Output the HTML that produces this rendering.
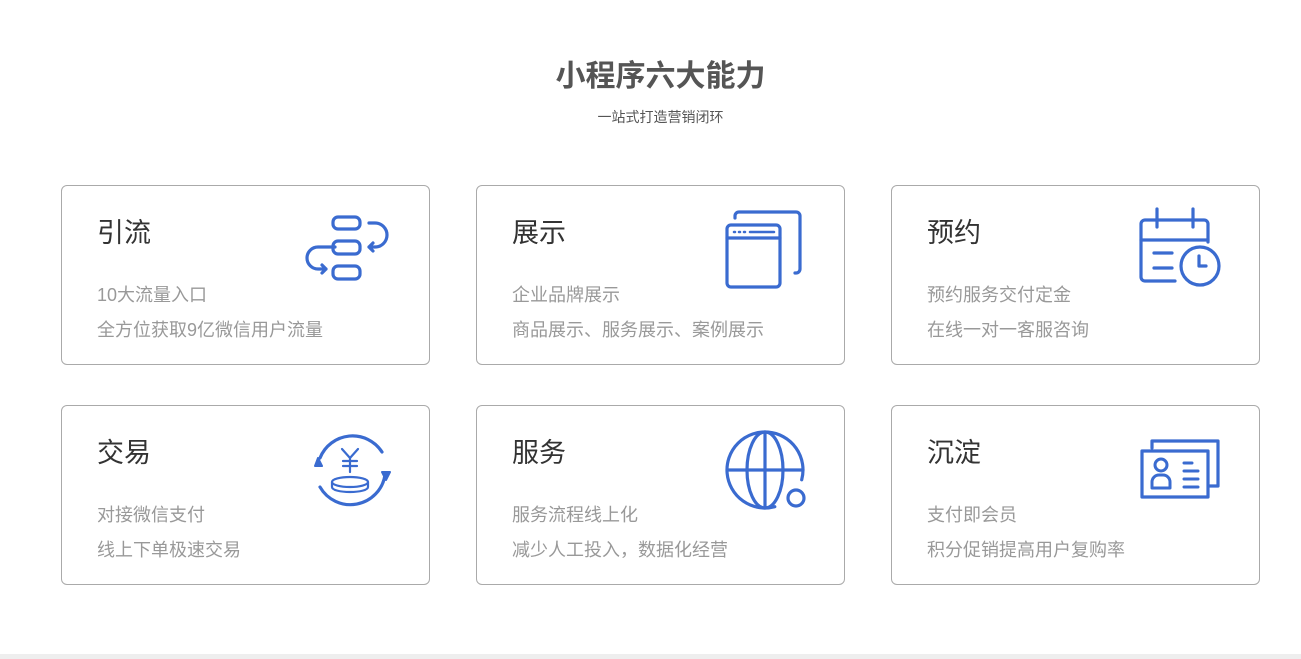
<!DOCTYPE html><html><head><meta charset="utf-8"><style>
body{margin:0;width:1301px;height:659px;background:#fff;position:relative;overflow:hidden;font-family:"Liberation Sans","Noto Sans CJK SC",sans-serif}
.h{position:absolute;top:59px;left:10px;width:1301px;text-align:center;font-size:30px;font-weight:bold;color:#555;line-height:36px}
.s{position:absolute;top:108px;left:10px;width:1301px;text-align:center;font-size:14px;color:#555;line-height:18px}
.c{position:absolute;width:369px;height:180px;border:1px solid #aaa;border-radius:6px;box-sizing:border-box}
.t{position:absolute;left:35px;top:30px;font-size:27px;color:#333;line-height:34px}
.p{position:absolute;left:35px;font-size:18px;color:#999;line-height:22px}
.bar{position:absolute;left:0;top:654px;width:1301px;height:5px;background:#eee}
svg{position:absolute;left:0;top:0}
</style></head><body>
<div class="h">小程序六大能力</div><div class="s">一站式打造营销闭环</div>
<div class="c" style="left:61px;top:185px"><div class="t">引流</div><div class="p" style="top:98px">10大流量入口</div><div class="p" style="top:133px">全方位获取9亿微信用户流量</div></div>
<div class="c" style="left:476px;top:185px"><div class="t">展示</div><div class="p" style="top:98px">企业品牌展示</div><div class="p" style="top:133px">商品展示、服务展示、案例展示</div></div>
<div class="c" style="left:891px;top:185px"><div class="t">预约</div><div class="p" style="top:98px">预约服务交付定金</div><div class="p" style="top:133px">在线一对一客服咨询</div></div>
<div class="c" style="left:61px;top:405px"><div class="t">交易</div><div class="p" style="top:98px">对接微信支付</div><div class="p" style="top:133px">线上下单极速交易</div></div>
<div class="c" style="left:476px;top:405px"><div class="t">服务</div><div class="p" style="top:98px">服务流程线上化</div><div class="p" style="top:133px">减少人工投入，数据化经营</div></div>
<div class="c" style="left:891px;top:405px"><div class="t">沉淀</div><div class="p" style="top:98px">支付即会员</div><div class="p" style="top:133px">积分促销提高用户复购率</div></div>
<div class="bar"></div>
<svg width="1301" height="659" fill="none" stroke="#3a6bd0" stroke-width="3.2" stroke-linecap="round" stroke-linejoin="round">
<rect x="333" y="217" width="27" height="12" rx="5"/><rect x="333" y="241" width="27" height="13" rx="5"/><rect x="333" y="266" width="27" height="13" rx="5"/>
<path d="M369 223h6a10 10 0 0 1 0 24h-6M373 243l-4 4 4 4"/>
<path d="M335 247h-17a11 11 0 0 0 0 22h8M322 265l4 4-4 4"/>
<path d="M735 218v-2a4 4 0 0 1 4-4h57a4 4 0 0 1 4 4v53a4 4 0 0 1-4 4h-1"/>
<rect x="727" y="225" width="53" height="62" rx="4"/><path d="M727 238h53"/>
<path d="M734 232h1M739 232h1M744 232h1M750 232h24" stroke-width="2.5"/>
<path d="M1175 281h-30a4 4 0 0 1-4-4v-53a4 4 0 0 1 4-4h59a4 4 0 0 1 4 4v18"/><path d="M1141 240h67M1157 209v18M1193 209v18M1154 253h18M1154 268h18"/>
<circle cx="1200" cy="266" r="19"/><path d="M1199 256v10h7"/>
<path d="M320 458a35 35 0 0 1 62-6M385 475a35 35 0 0 1-65 12"/>
<path d="M315 466l3-8 4 8zM382 472l4 8 4-8z" fill="#3a6bd0" stroke-width="2"/>
<path d="M342 449l8 9 8-9M350 458v14M343 461h14M343 466h14" stroke-width="2.2"/>
<ellipse cx="350" cy="482" rx="18" ry="5" stroke-width="2.2"/><path d="M332 482v5c0 3 8 5 18 5s18-2 18-5v-5" stroke-width="2.2"/>
<path d="M774.8 506.7A38 38 0 1 1 801.7 479.8"/><ellipse cx="765" cy="470" rx="18" ry="38"/><path d="M765 432v76M728 470h75"/>
<circle cx="796" cy="498" r="8"/>
<path d="M1152 448v-7h66v45h-9"/><rect x="1142" y="451" width="66" height="46"/>
<circle cx="1161" cy="465" r="6" stroke-width="3"/><path d="M1152 488v-6a7 7 0 0 1 7-7h4a7 7 0 0 1 7 7v6z" stroke-width="3"/>
<path d="M1184 463h8M1184 471h14M1184 479h14M1184 487h14" stroke-width="3"/>
</svg>
</body></html>
